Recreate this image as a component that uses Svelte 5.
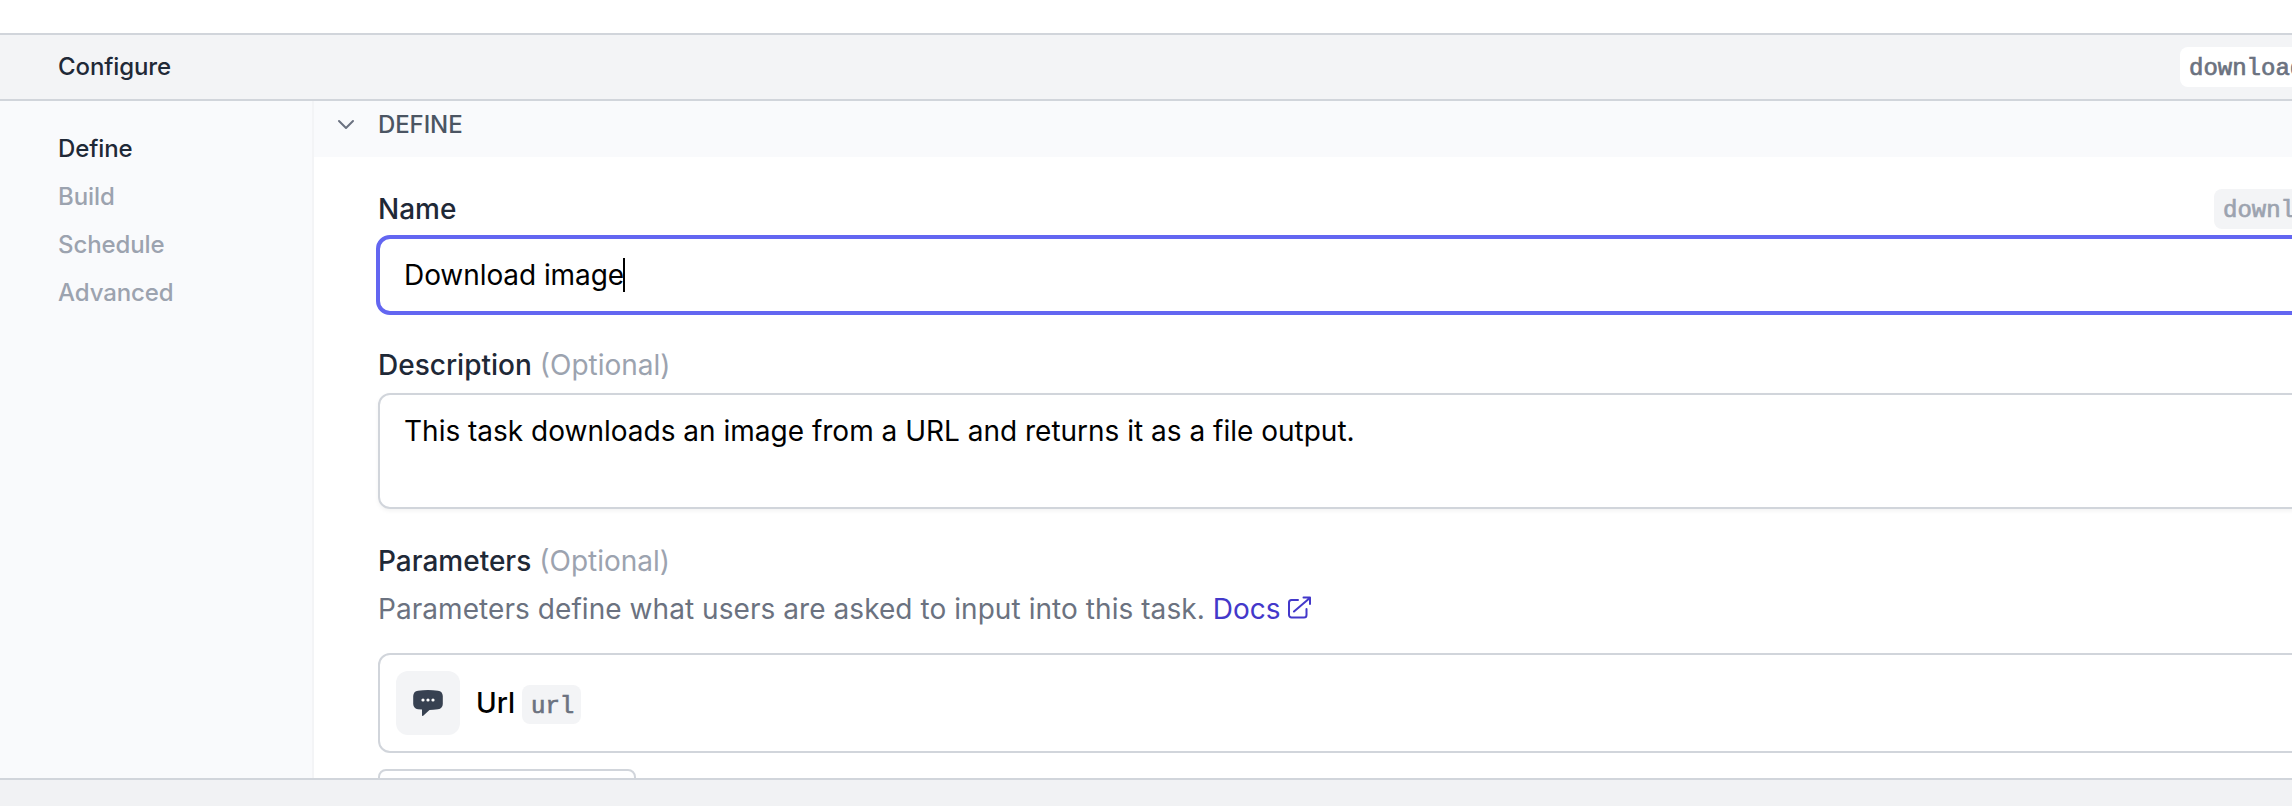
<script>
  const sections = ['Define', 'Build', 'Schedule', 'Advanced'];
  let active = $state('Define');
</script>

<div class="page">
  <div class="top"></div>
  <header class="bar">
    <span class="title">Configure</span>
    <code class="chip slug">download_image</code>
  </header>
  <div class="body">
    <nav class="side">
      {#each sections as s}
        <a class:active={s === active} href="#{s}" onclick={() => (active = s)}>{s}</a>
      {/each}
    </nav>
    <main class="main">
      <div class="section-head">
        <svg class="chev" width="20" height="12" viewBox="0 0 20 12" fill="none" stroke="#6b7280" stroke-width="2" stroke-linecap="round" stroke-linejoin="round"><path d="M3 2l7 7 7-7" /></svg>
        <span>DEFINE</span>
      </div>
      <div class="form">
        <div class="row name-row">
          <span class="label">Name</span>
          <code class="chip name-slug">download_image</code>
        </div>
        <div class="input"><span class="value">Download image</span><span class="caret"></span></div>
        <div class="row desc-row"><span class="label">Description</span><span class="opt">(Optional)</span></div>
        <div class="area"><span class="value">This task downloads an image from a URL and returns it as a file output.</span></div>
        <div class="row param-row"><span class="label">Parameters</span><span class="opt">(Optional)</span></div>
        <div class="row hint">
          <span class="hint-text">Parameters define what users are asked to input into this task.</span>
          <a class="docs" href="#docs"><span>Docs</span><svg width="24" height="24" viewBox="0 0 24 24" fill="none" stroke="#4338ca" stroke-width="2" stroke-linecap="round" stroke-linejoin="round"><path d="M11 4H4.500A2.500 2.500 0 0 0 2 6.500V19a2.500 2.500 0 0 0 2.500 2.500h12.500a2.500 2.500 0 0 0 2.500-2.500V13M7 15.500L22.800 2M16.500 1.500h6.500V8" /></svg></a>
        </div>
        <div class="param">
          <div class="tile">
            <svg width="30" height="26" viewBox="0 0 30 26"><path d="M5 .7Q15-.5 25 .7Q29.500 1.300 29.800 6V14Q29.600 18.600 25 19.200Q20 19.800 16.500 19.900L10.200 25.700Q9 26.300 9 25V19.500L5 19.200Q.5 18.600.2 14V6Q.5 1.300 5 .7Z" fill="#374151" /><g fill="#fff"><circle cx="10" cy="10" r="1.600" /><circle cx="15" cy="10" r="1.600" /><circle cx="20" cy="10" r="1.600" /></g></svg>
          </div>
          <span class="param-name">Url</span>
          <code class="chip url">url</code>
        </div>
        <div class="add"></div>
      </div>
    </main>
  </div>
  <footer class="foot"></footer>
</div>

<style>
  :global(body) { margin: 0; background: #fff; }
  .page { width: 2292px; height: 806px; display: flex; flex-direction: column; overflow: hidden; font-family: Inter, sans-serif; font-size: 28px; line-height: 40px; color: #1f2937; }
  .page * { box-sizing: border-box; }
  a { text-decoration: none; }
  .top { height: 33px; flex: none; }
  .bar { height: 68px; flex: none; display: flex; align-items: center; justify-content: space-between; background: #f3f4f6; border-top: 2px solid #d1d5db; border-bottom: 2px solid #d1d5db; padding-left: 58px; }
  .title { font-size: 24px; font-weight: 500; line-height: 32px; letter-spacing: -.1px; }
  .chip { flex: none; display: block; font-family: "Liberation Mono", monospace; font-size: 24px; line-height: 32px; height: 40px; padding: 6px 8px 2px 9px; border-radius: 8px; background: #f3f4f6; color: #9ca3af; -webkit-text-stroke: .7px currentColor; white-space: nowrap; overflow: hidden; }
  .slug { width: 112px; padding-right: 0; border-radius: 8px 0 0 8px; background: #fff; color: #6b7280; }
  .body { height: 677px; flex: none; display: flex; overflow: hidden; }
  .side { width: 314px; flex: none; display: flex; flex-direction: column; gap: 16px; padding: 32px 0 0 58px; background: #f9fafc; border-right: 2px solid #f3f4f6; font-size: 24px; line-height: 32px; font-weight: 500; letter-spacing: -.1px; }
  .side a { color: #9ca3af; }
  .side a.active { color: #1f2937; }
  .main { flex: 1; min-width: 0; }
  .section-head { height: 56px; display: flex; padding: 8px 0 0 22px; gap: 22px; background: #f9fafc; font-size: 24px; line-height: 32px; font-weight: 500; letter-spacing: -.1px; color: #4b5563; }
  .chev { margin: 10px 0 0; }
  .form { padding-left: 64px; display: flex; flex-direction: column; }
  .row { display: flex; height: 40px; flex: none; white-space: nowrap; }
  .label { font-weight: 500; }
  .opt { color: #9ca3af; margin-left: 8px; }
  .name-row { margin-top: 32px; justify-content: space-between; }
  .name-slug { width: 78px; padding-right: 0; border-radius: 8px 0 0 8px; }
  .input { height: 80px; margin: 6px -20px 0 -2px; display: flex; align-items: center; border: 4px solid #6366f1; border-radius: 14px; padding-left: 24px; color: #000; background: #fff; }
  .input .value { letter-spacing: -.07px; }
  .caret { width: 2px; height: 34px; background: #000; margin-left: -1px; }
  .desc-row { margin-top: 30px; }
  .area { height: 116px; margin: 8px -20px 0 0; border: 2px solid #d1d5db; border-radius: 12px; padding: 16px 24px; color: #000; box-shadow: 0 2px 4px rgba(0, 0, 0, .05); }
  .param-row { margin-top: 32px; }
  .hint { margin-top: 8px; color: #6b7280; }
  .hint-text { letter-spacing: .06px; }
  .docs { display: flex; margin-left: 8px; color: #4338ca; gap: 6px; }
  .docs svg { margin-top: 7px; }
  .param { height: 100px; margin: 24px -20px 0 0; display: flex; border: 2px solid #d1d5db; border-radius: 12px; padding: 16px; }
  .tile { width: 64px; height: 64px; flex: none; border-radius: 12px; background: #f3f4f6; display: flex; align-items: center; justify-content: center; }
  .param-name { margin: 12px 0 0 16px; font-weight: 500; color: #000; }
  .url { margin: 14px 0 0 7px; height: 39px; width: 59px; padding-right: 0; color: #6b7280; }
  .add { width: 258px; height: 60px; flex: none; margin-top: 16px; border: 2px solid #d1d5db; border-radius: 8px; }
  .foot { height: 28px; flex: none; background: #f1f2f4; border-top: 2px solid #d1d5db; }
</style>
